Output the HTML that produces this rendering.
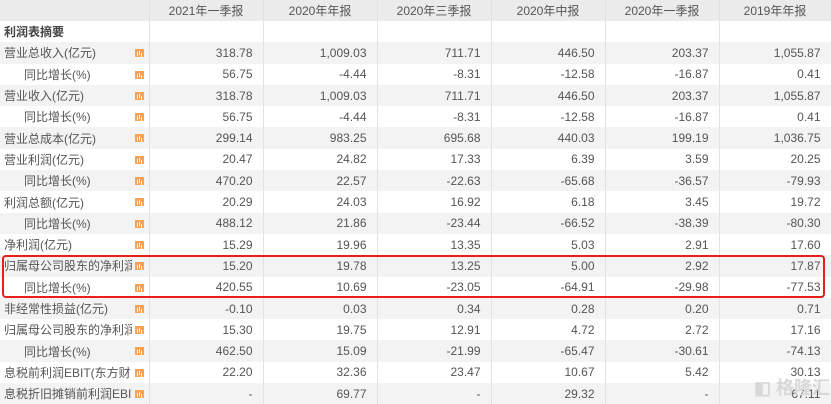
<!DOCTYPE html><html><head><meta charset="utf-8"><style>
body{margin:0;width:831px;height:402px;overflow:hidden;background:#fff;font-family:"Liberation Sans","Noto Sans CJK SC",sans-serif;font-size:12px;color:#555}
table{border-collapse:collapse;width:831px;table-layout:fixed}
tr{height:21.3px}
td{padding:0;border-right:1px solid #e2e2e2;white-space:nowrap;overflow:hidden;text-align:right;padding-right:10px;box-sizing:border-box}
td:first-child{text-align:left;padding-left:4px;padding-right:0;position:relative}
td:first-child b{font-weight:normal;display:inline-block;max-width:128px;overflow:hidden;vertical-align:middle}
td.s b{max-width:108px}
tr.h{height:21px}
tr.h td{background:#ebebeb;text-align:center;padding:0;color:#555}
tr.g td{background:#f3f3f3}
.i{position:absolute;left:135px;top:7px;width:9px;height:8px;background:#f6a35a}
.i:after{content:"";position:absolute;left:2px;bottom:1px;width:1px;height:4px;background:#fff;box-shadow:2px -1px 0 #fff,4px 1px 0 #fff}
.s{padding-left:24px!important}
.box{position:absolute;left:2px;top:255px;width:819px;height:39px;border:2px solid #e8201c;border-radius:4px}
.wm{position:absolute;left:754px;top:374px;color:#d8d8d8;font-size:18px;font-weight:bold;white-space:nowrap}
</style></head><body>
<table>
<colgroup><col style="width:149px"><col style="width:114px"><col style="width:114px"><col style="width:114px"><col style="width:114px"><col style="width:114px"><col style="width:112px"></colgroup>
<tr class="h"><td></td><td>2021年一季报</td><td>2020年年报</td><td>2020年三季报</td><td>2020年中报</td><td>2020年一季报</td><td>2019年年报</td></tr>
<tr><td style="font-weight:bold;color:#444">利润表摘要</td><td></td><td></td><td></td><td></td><td></td><td></td></tr>
<tr class="g"><td><b>营业总收入(亿元)</b><span class="i"></span></td><td>318.78</td><td>1,009.03</td><td>711.71</td><td>446.50</td><td>203.37</td><td>1,055.87</td></tr>
<tr><td class="s"><b>同比增长(%)</b><span class="i"></span></td><td>56.75</td><td>-4.44</td><td>-8.31</td><td>-12.58</td><td>-16.87</td><td>0.41</td></tr>
<tr class="g"><td><b>营业收入(亿元)</b><span class="i"></span></td><td>318.78</td><td>1,009.03</td><td>711.71</td><td>446.50</td><td>203.37</td><td>1,055.87</td></tr>
<tr><td class="s"><b>同比增长(%)</b><span class="i"></span></td><td>56.75</td><td>-4.44</td><td>-8.31</td><td>-12.58</td><td>-16.87</td><td>0.41</td></tr>
<tr class="g"><td><b>营业总成本(亿元)</b><span class="i"></span></td><td>299.14</td><td>983.25</td><td>695.68</td><td>440.03</td><td>199.19</td><td>1,036.75</td></tr>
<tr><td><b>营业利润(亿元)</b><span class="i"></span></td><td>20.47</td><td>24.82</td><td>17.33</td><td>6.39</td><td>3.59</td><td>20.25</td></tr>
<tr class="g"><td class="s"><b>同比增长(%)</b><span class="i"></span></td><td>470.20</td><td>22.57</td><td>-22.63</td><td>-65.68</td><td>-36.57</td><td>-79.93</td></tr>
<tr><td><b>利润总额(亿元)</b><span class="i"></span></td><td>20.29</td><td>24.03</td><td>16.92</td><td>6.18</td><td>3.45</td><td>19.72</td></tr>
<tr class="g"><td class="s"><b>同比增长(%)</b><span class="i"></span></td><td>488.12</td><td>21.86</td><td>-23.44</td><td>-66.52</td><td>-38.39</td><td>-80.30</td></tr>
<tr><td><b>净利润(亿元)</b><span class="i"></span></td><td>15.29</td><td>19.96</td><td>13.35</td><td>5.03</td><td>2.91</td><td>17.60</td></tr>
<tr class="g"><td><b>归属母公司股东的净利润(…</b><span class="i"></span></td><td>15.20</td><td>19.78</td><td>13.25</td><td>5.00</td><td>2.92</td><td>17.87</td></tr>
<tr><td class="s"><b>同比增长(%)</b><span class="i"></span></td><td>420.55</td><td>10.69</td><td>-23.05</td><td>-64.91</td><td>-29.98</td><td>-77.53</td></tr>
<tr class="g"><td><b>非经常性损益(亿元)</b><span class="i"></span></td><td>-0.10</td><td>0.03</td><td>0.34</td><td>0.28</td><td>0.20</td><td>0.71</td></tr>
<tr><td><b>归属母公司股东的净利润(…</b><span class="i"></span></td><td>15.30</td><td>19.75</td><td>12.91</td><td>4.72</td><td>2.72</td><td>17.16</td></tr>
<tr class="g"><td class="s"><b>同比增长(%)</b><span class="i"></span></td><td>462.50</td><td>15.09</td><td>-21.99</td><td>-65.47</td><td>-30.61</td><td>-74.13</td></tr>
<tr><td><b>息税前利润EBIT(东方财…</b><span class="i"></span></td><td>22.20</td><td>32.36</td><td>23.47</td><td>10.67</td><td>5.42</td><td>30.13</td></tr>
<tr class="g"><td><b>息税折旧摊销前利润EBIT…</b><span class="i"></span></td><td>-</td><td>69.77</td><td>-</td><td>29.32</td><td>-</td><td>67.11</td></tr>
</table>
<div class="box"></div>
<div class="wm">◧ 格隆汇</div>
</body></html>
